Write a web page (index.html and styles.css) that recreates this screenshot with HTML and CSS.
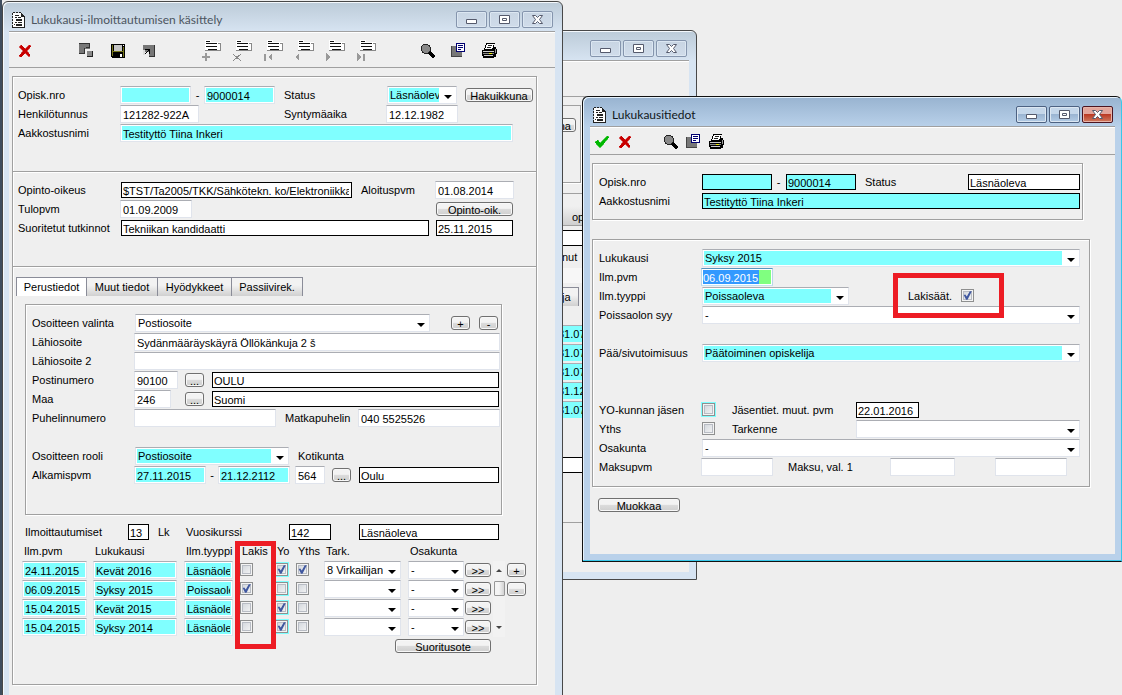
FILE: index.html
```
<!DOCTYPE html>
<html lang="fi">
<head>
<meta charset="utf-8">
<title>Lukukausi-ilmoittautumisen käsittely</title>
<link rel="stylesheet" href="styles.css">
</head>
<body>
<svg class="defs" aria-hidden="true">
  <symbol id="i-app" viewBox="0 0 14 16">
    <path d="M1 1H9L13 5V15H1Z" fill="#fff"/>
    <path d="M1 0h2v1h-2zM4 0h2v1h-2zM7 0h2v1h-2zM9 1h1v1h1v1h1v1h1v1h-4zM12 5h1v11h-1zM0 15h13v1h-13zM0 1h1v2h-1zM0 4h1v2h-1zM0 7h1v2h-1zM0 10h1v2h-1zM0 13h1v2h-1zM3 3h4v1h-4zM3 5h2v1h-2zM6 5h3v1h-3zM4 7h6v2h-6zM3 10h2v1h-2zM6 10h4v1h-4zM4 12h6v2h-6zM2 12h1v1h-1z" fill="#222"/>
  </symbol>
  <symbol id="i-x" viewBox="0 0 14 14">
    <path d="M1 3L3 1L7 5L11 1L13 2L9 7L12 11L11 13L7 9L3 13L1 12L5 7Z" fill="#c80000" stroke="#c80000" stroke-width=".6"/>
  </symbol>
  <symbol id="i-ok" viewBox="0 0 16 14">
    <path d="M1 7L4 5L6 8L13 1L15 2L7 12H5Z" fill="#00b800" stroke="#00b800" stroke-width=".6"/>
  </symbol>
  <symbol id="i-copy" viewBox="0 0 15 15">
    <path d="M0 0h11v6h-5v5h-6z" fill="#777"/><path d="M0 0h11v1h-11zM10 1h1v4h-4v-1h3zM5 5h1v6h-6v-1h5z" fill="#333"/>
    <path d="M8 8h6v6h-6z" fill="#888"/><path d="M13 8h1v6h-6v-1h5z" fill="#222"/>
  </symbol>
  <symbol id="i-save" viewBox="0 0 14 14">
    <path d="M0 0h14v14h-13l-1-1z" fill="#000"/><path d="M1 1h1v11h-1zM12 3h1v10h-1zM2 7h10v1h-10z" fill="#77771a"/>
    <path d="M3 1h8v6h-8z" fill="#c6c6c6"/><path d="M12 1h1v1h-1zM9 10h2v3h-2z" fill="#fff"/>
  </symbol>
  <symbol id="i-go" viewBox="0 0 12 12">
    <path d="M0 0h11v11h-5v-4h-6z" fill="#777"/><path d="M11 0h1v12h-6v-1h5z" fill="#333"/>
    <path d="M2 4h5v5h-1v-3h-1v1h-1v1h-1v1h-1v1h-1v-1h1v-1h1v-1h1v-1h1v-1h-3z" fill="#000"/>
    <path d="M0 5h2v5h-2z" fill="#ddd"/>
  </symbol>
  <symbol id="i-rec" viewBox="0 0 20 13">
    <path d="M3 0h6v2h10v9h-16z" fill="#fff"/>
    <path d="M4 1h4v1h-4zM4 3h11v1h-11zM4 6h11v1h-11zM6 9h9v1h-9z" fill="#111"/>
    <path d="M16 3h3v8h-16v-1h15v-6h-2z" fill="#888"/>
  </symbol>
  <symbol id="i-find" viewBox="0 0 16 16">
    <path d="M3 1h5v1h2v2h1v4h-1v2h-2v1h-4v-1h-2v-2h-1v-5h1v-1h1z" fill="#222"/>
    <path d="M3 2h5v1h1v1h1v4h-1v1h-1v1h-4v-1h-1v-1h-1v-5h1z" fill="#888"/>
    <path d="M10 8L15 13L14 15H12L8 10Z" fill="#000"/>
  </symbol>
  <symbol id="i-doc" viewBox="0 0 15 15">
    <path d="M0 3h11v11h-11z" fill="#777"/><path d="M0 3h1v11h-1zM0 13h11v1h-11z" fill="#444"/>
    <path d="M5 0h9v9h-9z" fill="#000070"/><path d="M6 1h7v7h-7z" fill="#fff"/>
    <path d="M7 2h5v1h-5zM7 4h5v1h-5zM7 6h3v1h-3z" fill="#000070"/>
  </symbol>
  <symbol id="i-print" viewBox="0 0 17 16">
    <path d="M5 0h9v1h-1v3h2v2h1v5h-1v3h-2v1h-11v-2h-1v-6h2v-2h1v-3h1z" fill="#000"/>
    <path d="M6 1h7v1h-1v3h-1v1h-7v-1h1v-3h1z" fill="#fff"/><path d="M7 2h4v1h-4zM6 4h4v1h-4z" fill="#222"/>
    <path d="M2 8h11v1h-11zM3 12h9v1h-9z" fill="#ccc"/><path d="M2 10h11v1h-11z" fill="#888"/><path d="M8 10h3v1h-3z" fill="#ee0"/>
    <path d="M14 6h1v4h-1z" fill="#999"/>
  </symbol>
  <symbol id="i-min" viewBox="0 0 13 13"><path d="M1.500 6.500h10v4h-10z" fill="#fff" stroke="#555a6c"/></symbol>
  <symbol id="i-max" viewBox="0 0 13 13"><path d="M1.500 2.500h10v8h-10zM4.500 5.500h4v2h-4z" fill="#fff" stroke="#555a6c"/></symbol>
  <symbol id="i-close" viewBox="0 0 13 13"><path d="M1.500 2.500H4.500L6.500 4.500L8.500 2.500H11.500L8.500 6.500L11.500 10.500H8.500L6.500 8.500L4.500 10.500H1.500L4.500 6.500Z" fill="#fff" stroke="#555a6c"/></symbol>
</svg>

<main class="desktop">

  <section class="window win-back" aria-label="Taustaikkuna">
    <header class="titlebar">
      <div class="controls">
        <button aria-label="Pienennä"><svg><use href="#i-min"/></svg></button>
        <button aria-label="Suurenna"><svg><use href="#i-max"/></svg></button>
        <button aria-label="Sulje"><svg><use href="#i-close"/></svg></button>
      </div>
    </header>
    <div class="client">
      <div class="toolbar"></div>
      <div class="back-group"><button class="btn">na</button></div>
      <div class="back-bar">op</div>
      <div class="back-line"></div>
      <div class="back-label">nut</div>
      <div class="back-band"></div>
      <div class="back-tab">ja</div>
      <div class="back-list">
        <span>31.07</span><span>31.07</span><span>31.07</span><span>31.12</span><span>31.07</span>
      </div>
      <div class="back-line low"></div>
      <div class="back-rule"></div>
    </div>
  </section>

  <section class="window win-main">
    <header class="titlebar">
      <svg class="app"><use href="#i-app"/></svg>
      <h1>Lukukausi-ilmoittautumisen käsittely</h1>
      <div class="controls">
        <button aria-label="Pienennä"><svg><use href="#i-min"/></svg></button>
        <button aria-label="Suurenna"><svg><use href="#i-max"/></svg></button>
        <button aria-label="Sulje"><svg><use href="#i-close"/></svg></button>
      </div>
    </header>
    <div class="client">
      <div class="toolbar">
        <button aria-label="Peruuta"><svg width="14" height="14"><use href="#i-x"/></svg></button>
        <button class="skip" aria-label="Kopioi"><svg width="15" height="15"><use href="#i-copy"/></svg></button>
        <button aria-label="Tallenna"><svg width="14" height="14"><use href="#i-save"/></svg></button>
        <button aria-label="Siirry"><svg width="12" height="12"><use href="#i-go"/></svg></button>
        <button class="skip" aria-label="Lisää rivi"><svg width="22" height="22" viewBox="-2 0 22 22"><use href="#i-rec" width="20" height="13"/><path class="mark" d="M3 13h2v3h3v2h-3v3h-2v-3h-3v-2h3z"/></svg></button>
        <button aria-label="Poista rivi"><svg width="22" height="22" viewBox="-2 0 22 22"><use href="#i-rec" width="20" height="13"/><path class="line" d="M0 14L8 21M8 14L0 21"/></svg></button>
        <button aria-label="Ensimmäinen"><svg width="22" height="22" viewBox="-2 0 22 22"><use href="#i-rec" width="20" height="13"/><path class="mark" d="M0 14h2v7h-2zM8 13v8l-4-4z"/></svg></button>
        <button aria-label="Edellinen"><svg width="22" height="22" viewBox="-2 0 22 22"><use href="#i-rec" width="20" height="13"/><path class="mark" d="M4 13v8l-4-4z"/></svg></button>
        <button aria-label="Seuraava"><svg width="22" height="22" viewBox="-2 0 22 22"><use href="#i-rec" width="20" height="13"/><path class="mark" d="M0 13v8l4-4z"/></svg></button>
        <button aria-label="Viimeinen"><svg width="22" height="22" viewBox="-2 0 22 22"><use href="#i-rec" width="20" height="13"/><path class="mark" d="M0 13v8l4-4zM6 14h2v7h-2z"/></svg></button>
        <button class="skip" aria-label="Hae"><svg width="16" height="16"><use href="#i-find"/></svg></button>
        <button aria-label="Liitteet"><svg width="15" height="15"><use href="#i-doc"/></svg></button>
        <button aria-label="Tulosta"><svg width="17" height="16"><use href="#i-print"/></svg></button>
      </div>

      <div class="group">
        <div class="part">
          <div class="row r-id">
            <label for="nro1">Opisk.nro</label>
            <input id="nro1" class="field cyan">
            <span class="dash">-</span>
            <input class="field cyan" aria-label="Opisk.nro, loppu" value="9000014">
            <label class="mid" for="status">Status</label>
            <span class="combo cyan"><select id="status"><option>Läsnäoleva</option></select></span>
            <button class="btn">Hakuikkuna</button>
          </div>
          <div class="row r-birth">
            <label for="hetu">Henkilötunnus</label>
            <input id="hetu" class="field w79" value="121282-922A">
            <label for="synt">Syntymäaika</label>
            <input id="synt" class="field" value="12.12.1982">
          </div>
          <div class="row r-name">
            <label for="nimi">Aakkostusnimi</label>
            <input id="nimi" class="field cyan" value="Testityttö Tiina Inkeri">
          </div>
        </div>

        <div class="part">
          <div class="row r-right">
            <label for="oik">Opinto-oikeus</label>
            <input id="oik" class="field boxed" value="$TST/Ta2005/TKK/Sähkötekn. ko/Elektroniikka">
            <label class="mid" for="alku">Aloituspvm</label>
            <input id="alku" class="field" value="01.08.2014">
          </div>
          <div class="row r-entry">
            <label for="tulo">Tulopvm</label>
            <input id="tulo" class="field w72" value="01.09.2009">
            <button class="btn">Opinto-oik.</button>
          </div>
          <div class="row r-degree">
            <label for="tutk">Suoritetut tutkinnot</label>
            <input id="tutk" class="field boxed" value="Tekniikan kandidaatti">
            <input class="field boxed" aria-label="Tutkinnon pvm" value="25.11.2015">
          </div>
        </div>

        <div class="part tabbed">
          <nav class="tabs">
            <button class="on">Perustiedot</button><button>Muut tiedot</button><button class="wide">Hyödykkeet</button><button>Passiivirek.</button>
          </nav>
          <div class="panel">
            <div class="row a-choice">
              <label for="osv">Osoitteen valinta</label>
              <span class="combo"><select id="osv"><option>Postiosoite</option></select></span>
              <button class="btn">+</button>
              <button class="btn">-</button>
            </div>
            <div class="row a-wide"><label for="l1">Lähiosoite</label><input id="l1" class="field" value="Sydänmääräyskäyrä Öllökänkuja 2 š"></div>
            <div class="row a-wide"><label for="l2">Lähiosoite 2</label><input id="l2" class="field"></div>
            <div class="row a-code">
              <label for="pn">Postinumero</label><input id="pn" class="field" value="90100">
              <button class="btn">...</button><input class="field boxed" aria-label="Postitoimipaikka" value="OULU">
            </div>
            <div class="row a-code">
              <label for="maa">Maa</label><input id="maa" class="field w37" value="246">
              <button class="btn">...</button><input class="field boxed" aria-label="Maan nimi" value="Suomi">
            </div>
            <div class="row a-phone">
              <label for="puh">Puhelinnumero</label><input id="puh" class="field">
              <label class="mid" for="matka">Matkapuhelin</label><input id="matka" class="field" value="040 5525526">
            </div>
            <div class="row a-role after-gap">
              <label for="rooli">Osoitteen rooli</label>
              <span class="combo cyan"><select id="rooli"><option>Postiosoite</option></select></span>
              <label class="mid" for="kunta">Kotikunta</label>
            </div>
            <div class="row a-dates">
              <label for="alk">Alkamispvm</label><input id="alk" class="field cyan" value="27.11.2015">
              <span class="dash">-</span><input class="field cyan" aria-label="Päättymispvm" value="21.12.2112">
              <input id="kunta" class="field" value="564"><button class="btn">...</button>
              <input class="field boxed" aria-label="Kotikunnan nimi" value="Oulu">
            </div>
          </div>

          <div class="row e-head">
            <label for="lkm">Ilmoittautumiset</label><input id="lkm" class="field boxed" value="13">
            <label class="mid" for="lkm">Lk</label>
            <label for="vk">Vuosikurssi</label><input id="vk" class="field boxed w42" value="142">
            <input class="field boxed" aria-label="Tila" value="Läsnäoleva">
          </div>
          <div class="enrol">
            <div class="marked">
              <table>
                <colgroup><col class="c1"><col class="c2"><col class="c3"><col class="c4"><col class="c5"><col class="c6"><col class="c7"><col class="c8"><col class="c9"></colgroup>
                <thead><tr><th>Ilm.pvm</th><th>Lukukausi</th><th>Ilm.tyyppi</th><th>Lakis</th><th>Yo</th><th>Yths</th><th>Tark.</th><th>Osakunta</th><th></th></tr></thead>
                <tbody>
                  <tr>
                    <td><input class="field cyan w65" aria-label="Ilm.pvm" value="24.11.2015"></td>
                    <td><input class="field cyan w84" aria-label="Lukukausi" value="Kevät 2016"></td>
                    <td><input class="field cyan w49" aria-label="Ilm.tyyppi" value="Läsnäoleva"></td>
                    <td><input type="checkbox" aria-label="Lakis"></td>
                    <td><input type="checkbox" class="req" aria-label="Yo" checked></td>
                    <td><input type="checkbox" aria-label="Yths" checked></td>
                    <td><span class="combo w77"><select aria-label="Tark."><option>8 Virkailijan</option></select></span></td>
                    <td><span class="combo w56"><select aria-label="Osakunta"><option>-</option></select></span></td>
                    <td><button class="btn">&gt;&gt;</button></td>
                  </tr>
                  <tr>
                    <td><input class="field cyan w65" aria-label="Ilm.pvm" value="06.09.2015"></td>
                    <td><input class="field cyan w84" aria-label="Lukukausi" value="Syksy 2015"></td>
                    <td><input class="field cyan w49" aria-label="Ilm.tyyppi" value="Poissaoleva"></td>
                    <td><input type="checkbox" aria-label="Lakis" checked></td>
                    <td><input type="checkbox" class="req" aria-label="Yo"></td>
                    <td><input type="checkbox" aria-label="Yths"></td>
                    <td><span class="combo w77"><select aria-label="Tark."><option></option></select></span></td>
                    <td><span class="combo w56"><select aria-label="Osakunta"><option>-</option></select></span></td>
                    <td><button class="btn">&gt;&gt;</button></td>
                  </tr>
                  <tr>
                    <td><input class="field cyan w65" aria-label="Ilm.pvm" value="15.04.2015"></td>
                    <td><input class="field cyan w84" aria-label="Lukukausi" value="Kevät 2015"></td>
                    <td><input class="field cyan w49" aria-label="Ilm.tyyppi" value="Läsnäoleva"></td>
                    <td><input type="checkbox" aria-label="Lakis"></td>
                    <td><input type="checkbox" class="req" aria-label="Yo" checked></td>
                    <td><input type="checkbox" aria-label="Yths"></td>
                    <td><span class="combo w77"><select aria-label="Tark."><option></option></select></span></td>
                    <td><span class="combo w56"><select aria-label="Osakunta"><option>-</option></select></span></td>
                    <td><button class="btn">&gt;&gt;</button></td>
                  </tr>
                  <tr>
                    <td><input class="field cyan w65" aria-label="Ilm.pvm" value="15.04.2015"></td>
                    <td><input class="field cyan w84" aria-label="Lukukausi" value="Syksy 2014"></td>
                    <td><input class="field cyan w49" aria-label="Ilm.tyyppi" value="Läsnäoleva"></td>
                    <td><input type="checkbox" aria-label="Lakis"></td>
                    <td><input type="checkbox" class="req" aria-label="Yo" checked></td>
                    <td><input type="checkbox" aria-label="Yths"></td>
                    <td><span class="combo w77"><select aria-label="Tark."><option></option></select></span></td>
                    <td><span class="combo w56"><select aria-label="Osakunta"><option>-</option></select></span></td>
                    <td><button class="btn">&gt;&gt;</button></td>
                  </tr>
                </tbody>
              </table>
              <div class="callout callout-column"></div>
              <button class="btn report">Suoritusote</button>
            </div>
            <div class="scroller"><i class="up"></i><i class="thumb"></i><i class="down"></i></div>
            <div class="stack"><button class="btn">+</button><button class="btn">-</button></div>
          </div>
        </div>
      </div>
    </div>
  </section>

  <section class="window win-term">
    <header class="titlebar">
      <svg class="app"><use href="#i-app"/></svg>
      <h1>Lukukausitiedot</h1>
      <div class="controls">
        <button aria-label="Pienennä"><svg><use href="#i-min"/></svg></button>
        <button aria-label="Suurenna"><svg><use href="#i-max"/></svg></button>
        <button class="red" aria-label="Sulje"><svg><use href="#i-close"/></svg></button>
      </div>
    </header>
    <div class="client">
      <div class="toolbar tight">
        <button aria-label="Hyväksy"><svg width="16" height="14"><use href="#i-ok"/></svg></button>
        <button aria-label="Peruuta"><svg width="14" height="14"><use href="#i-x"/></svg></button>
        <button class="skip" aria-label="Hae"><svg width="16" height="16"><use href="#i-find"/></svg></button>
        <button aria-label="Liitteet"><svg width="15" height="15"><use href="#i-doc"/></svg></button>
        <button aria-label="Tulosta"><svg width="17" height="16"><use href="#i-print"/></svg></button>
      </div>

      <div class="group person">
        <div class="row t-id">
          <label for="tn">Opisk.nro</label><input id="tn" class="field boxed cyan">
          <span class="dash">-</span><input class="field boxed cyan" aria-label="Opisk.nro, loppu" value="9000014">
          <label class="mid" for="ts">Status</label><input id="ts" class="field boxed" value="Läsnäoleva">
        </div>
        <div class="row t-wide"><label for="ta">Aakkostusnimi</label><input id="ta" class="field boxed cyan" value="Testityttö Tiina Inkeri"></div>
      </div>

      <div class="group term">
        <div class="row t-wide"><label for="tl">Lukukausi</label><span class="combo cyan"><select id="tl"><option>Syksy 2015</option></select></span></div>
        <div class="row t-date"><label for="tp">Ilm.pvm</label><span class="field active"><input id="tp" value="06.09.2015"></span></div>
        <div class="row t-type">
          <label for="tt">Ilm.tyyppi</label><span class="combo cyan"><select id="tt"><option>Poissaoleva</option></select></span>
          <span class="legal"><label for="tlak">Lakisäät.</label><input type="checkbox" id="tlak" checked><span class="callout callout-legal"></span></span>
        </div>
        <div class="row t-wide"><label for="tsyy">Poissaolon syy</label><span class="combo"><select id="tsyy"><option>-</option></select></span></div>
        <div class="row t-wide after-gap"><label for="tpaa">Pää/sivutoimisuus</label><span class="combo cyan"><select id="tpaa"><option>Päätoiminen opiskelija</option></select></span></div>
        <div class="row t-check after-gap2">
          <label for="tyo">YO-kunnan jäsen</label><input type="checkbox" class="req" id="tyo">
          <label for="tj">Jäsentiet. muut. pvm</label><input id="tj" class="field boxed w63" value="22.01.2016">
        </div>
        <div class="row t-check">
          <label for="ty">Yths</label><input type="checkbox" id="ty">
          <label for="tk">Tarkenne</label><span class="combo"><select id="tk"><option></option></select></span>
        </div>
        <div class="row t-wide"><label for="to">Osakunta</label><span class="combo"><select id="to"><option>-</option></select></span></div>
        <div class="row t-pay">
          <label for="tm">Maksupvm</label><input id="tm" class="field">
          <label for="tv">Maksu, val. 1</label><input id="tv" class="field w65"><input class="field" aria-label="Maksu, val. 2">
        </div>
      </div>
      <button class="btn edit">Muokkaa</button>
    </div>
  </section>
</main>
</body>
</html>
```
FILE: styles.css
```
* { box-sizing: border-box; }
body {
  margin: 0;
  font: 11px/18px "Liberation Sans", Arial, sans-serif;
  color: #000;
}
button, input, select { font: inherit; color: inherit; margin: 0; padding: 0; border: 0; border-radius: 0; background: none; }
input, select { min-width: 0; outline: 0; }
label { white-space: nowrap; }
svg { display: block; shape-rendering: crispEdges; }
.defs { position: absolute; width: 0; height: 0; }

.desktop {
  position: relative;
  height: 100vh;
  overflow: hidden;
  background: linear-gradient(90deg, #3f4d5e 2px, #eee 2px);
}

/* window frame */
.window {
  position: absolute;
  display: flex;
  flex-direction: column;
  border: 1px solid #484848;
  border-radius: 6px 6px 0 0;
  padding: 0 7px 7px 6px;
  background: linear-gradient(#bccbd8, #d7e4f2 30px);
  box-shadow: inset 1px 1px #f4f8fc;
}
.win-back { left: 555px; top: 30px; width: 142px; height: 550px; }
.win-main { left: 2px; top: 1px; width: 561px; bottom: -16px; }
.win-term {
  left: 582px; top: 96px; right: 0; height: 466px;
  padding: 0 6px 7px 7px;
  border-color: #111;
  border-right-color: #38c8ea;
  background: linear-gradient(#98b3d0, #b9d1ea 30px);
  box-shadow: inset 0 -1px #38c8ea, inset 1px 1px #e6f2fc;
}
.titlebar { display: flex; align-items: center; height: 29px; padding: 6px 2px 0 3px; gap: 5px; }
.titlebar .app { width: 14px; height: 16px; }
.titlebar h1 { margin: 0; font: 12px/18px Lato, "Open Sans", sans-serif; color: #4c5560; white-space: nowrap; }
.win-term h1 { color: #101820; }
.controls { display: flex; gap: 2px; margin-left: auto; }
.controls button {
  display: grid; place-items: center;
  width: 31px; height: 17px;
  border: 1px solid #8595ad; border-radius: 2px;
  background: linear-gradient(#c8d5e3, #d0dcea);
  box-shadow: inset 0 0 0 1px #dce7f2;
}
.controls svg { width: 13px; height: 13px; shape-rendering: auto; }
.win-term .controls button {
  border-color: #4d6282;
  background: linear-gradient(#c5d7ea 45%, #9bb5d2 50%, #b3cce6);
}
.win-term .controls .red {
  border-color: #4c1420;
  background: linear-gradient(#e3a59b 45%, #bb3a24 50%, #d07b60);
  box-shadow: inset 0 0 0 1px #e8b4a8;
}
.client { flex: 1; border-top: 1px solid #a0a0a0; background: #efefef; box-shadow: inset 0 1px #fff; }

.toolbar { display: flex; align-items: center; height: 36px; padding-top: 2px; border-bottom: 1px solid #a0a0a0; }
.toolbar button { display: grid; place-items: center; width: 31px; height: 28px; }
.toolbar .skip { margin-left: 31px; }
.toolbar.tight { height: 28px; }
.toolbar.tight button { width: 23px; height: 24px; }
.toolbar.tight .skip { margin-left: 23px; }
.mark { fill: #999; }
.line { stroke: #888; stroke-width: 1; fill: none; }

/* etched groups */
.group, .panel { border: 1px solid #a0a0a0; box-shadow: 1px 1px #fff, inset 1px 1px #fff; }
.group { margin: 8px 18px 0 3px; }
.part { padding: 9px 3px 0 5px; height: 94px; }
.part + .part { height: 95px; border-top: 1px solid #a0a0a0; box-shadow: inset 0 1px #fff; }
.part.tabbed { height: 418px; padding: 10px 3px 0 3px; }

.row { display: grid; height: 19px; align-items: start; }
.mid { padding-left: 9px; }
.dash { text-align: center; }
.after-gap { margin-top: 19px; }
.after-gap2 { margin-top: 38px; }

/* controls */
.field {
  width: 100%; height: 18px;
  padding: 1px 2px 0;
  border: 1px solid #e0e4ec;
  border-top-color: #abadb3;
  background: #fff;
  box-shadow: inset 0 0 0 1px #fff;
}
.field.cyan { background: #80ffff; }
.field.boxed { height: 16px; margin-top: 1px; padding: 1px 2px 0 1px; border-color: #000; box-shadow: none; }
.row > .field.boxed { margin-left: 1px; width: calc(100% - 1px); }
.field.active { display: block; border-color: #5794bf #b7d5ea #c5e2ef; background: #80ff80; padding: 1px; }
.field.active input { display: block; width: 56px; height: 14px; padding-top: 1px; background: #3399ff; color: #fff; }

.combo {
  display: flex; align-items: center;
  width: 100%; height: 18px;
  border: 1px solid #e0e4ec;
  border-top-color: #abadb3;
  background: #fff;
}
.combo select { appearance: none; flex: 1; height: 14px; margin-left: 1px; padding-left: 1px; line-height: 14px; overflow: hidden; }
.combo.cyan select { background: #80ffff; }
.combo::after {
  content: ""; flex: none;
  margin: 3px 4px 0 5px;
  border: 4px solid transparent;
  border-top-color: #000; border-bottom: 0;
}

input[type="checkbox"] {
  appearance: none; display: block; position: relative;
  width: 13px; height: 13px; margin-top: 2px;
  border: 1px solid #8e8f8f;
  background: linear-gradient(135deg, #cdd2d8, #f8f8f8);
  box-shadow: inset 0 0 0 1px #f4f4f4, inset 0 0 0 2px #b8bcc4;
}
input[type="checkbox"].req { outline: 1px solid #80ffff; }
input[type="checkbox"]:checked::before {
  content: ""; position: absolute; inset: 1px;
  background: #4058a0;
  clip-path: polygon(8% 45%, 25% 38%, 42% 62%, 75% 4%, 98% 4%, 50% 98%, 34% 98%);
}

.btn {
  width: 100%; height: 14px; margin-top: 2px; padding-top: 1px;
  border: 1px solid #707070; border-radius: 3px;
  background: linear-gradient(#f3f3f3 45%, #dcdcdc 50%, #cfcfcf);
  box-shadow: inset 0 0 0 1px #f8f8f8;
  line-height: 13px; white-space: nowrap;
}

.w37 { width: 37px; } .w42 { width: 42px; } .w49 { width: 49px; } .w56 { width: 56px; }
.w63 { width: 63px; } .w65 { width: 65px; } .w72 { width: 72px; } .w77 { width: 77px; }
.w79 { width: 79px; } .w84 { width: 84px; }
.row > .field.boxed.w42 { width: 42px; }
.row > .field.boxed.w63 { width: 63px; }

/* main window rows */
.r-id { grid-template-columns: 102px 71px 13px 71px 112px 1fr 68px; }
.r-id .btn { justify-self: end; }
.r-id .combo { width: 70px; }
.r-birth { grid-template-columns: 102px 164px 102px 72px; }
.r-name { grid-template-columns: 102px 1fr; padding-right: 20px; }
.r-right { grid-template-columns: 102px 1fr 83px 79px; padding-right: 19px; }
.r-entry { grid-template-columns: 102px 1fr 77px; padding-right: 20px; }
.r-degree { grid-template-columns: 96px 1fr 78px; column-gap: 6px; padding-right: 20px; }

.tabs { display: flex; height: 19px; }
.tabs button {
  width: 71px;
  border: solid #8a8c98; border-width: 1px 1px 0 0;
  background: linear-gradient(#f2f2f2 40%, #d0d0d0);
  white-space: nowrap;
}
.tabs .on { background: #fff; border-left-width: 1px; }
.tabs .wide { width: 74px; }
.panel { margin: 8px 31px 0 9px; height: 211px; padding: 9px 1px 0 6px; }
.a-choice { grid-template-columns: 94px 1fr 31px 19px; column-gap: 9px; padding-right: 2px; }
.a-choice .btn { width: 19px; justify-self: end; }
.a-wide { grid-template-columns: 102px 1fr; }
.a-code { grid-template-columns: 102px 44px 33px 1fr; padding-right: 1px; }
.a-code .btn, .a-dates .btn { width: 19px; margin-left: 7px; }
.a-phone { grid-template-columns: 102px 142px 82px 1fr; }
.a-role { grid-template-columns: 103px 154px 1fr; }
.a-dates { grid-template-columns: 102px 72px 12px 72px 35px 33px 1fr; padding-right: 1px; }
#kunta { width: 30px; margin-left: 5px; }

.e-head { margin-top: 8px; grid-template-columns: 102px 22px 37px 102px 70px 1fr; padding: 0 34px 0 9px; }
.enrol { display: flex; padding-left: 6px; }
.marked { position: relative; }
table { width: 469px; table-layout: fixed; border-collapse: collapse; }
.c1 { width: 71px; } .c2 { width: 91px; } .c3 { width: 56px; } .c4 { width: 35px; } .c5 { width: 21px; }
.c6 { width: 28px; } .c7 { width: 84px; } .c8 { width: 57px; } .c9 { width: 26px; }
th { height: 19px; padding: 0 0 0 2px; font-weight: normal; text-align: left; vertical-align: top; white-space: nowrap; }
td { height: 19px; padding: 0; vertical-align: top; }
td > * { display: block; }
td > .combo { display: flex; }
.report { display: block; width: 96px; margin-left: auto; }
.scroller {
  display: flex; flex-direction: column; align-items: center;
  width: 12px; height: 76px; margin: 19px 2px 0; padding: 8px 0;
  background: #f2f2f2;
}
.up { border: 3px solid transparent; border-top: 0; border-bottom: 3px solid #444; }
.thumb { width: 11px; height: 15px; margin-top: 9px; border: 1px solid #979797; border-radius: 1px; background: linear-gradient(90deg, #f4f4f4 45%, #d2d2d2); }
.down { margin-top: auto; border: 3px solid transparent; border-bottom: 0; border-top: 3px solid #444; }
.stack { display: flex; flex-direction: column; gap: 5px; width: 19px; padding-top: 21px; }
.stack .btn { margin-top: 0; }

.callout { position: absolute; border: 5px solid #ed1c24; pointer-events: none; }
.callout-column { left: 213px; top: -1px; width: 41px; height: 108px; }
.callout-legal { left: -15px; top: -14px; width: 111px; height: 45px; }

/* term window rows */
.person { margin: 8px 32px 0 2px; height: 57px; padding: 9px 2px 0 6px; }
.term { margin: 19px 25px 0 2px; height: 248px; padding: 9px 9px 0 6px; }
.t-id { grid-template-columns: 102px 71px 13px 71px 111px 1fr; }
.t-wide { grid-template-columns: 103px 1fr; }
.t-date, .person .t-wide { grid-template-columns: 102px 1fr; }
.t-date .field { width: 72px; }
.t-type { grid-template-columns: 103px 147px 1fr; }
.legal { position: relative; display: flex; gap: 9px; margin-left: 59px; }
.t-check { grid-template-columns: 103px 30px 124px 1fr; }
.row.t-check > .boxed { margin-left: 0; }
.t-pay { grid-template-columns: 102px 87px 102px 105px 72px; }
.t-pay .field:nth-of-type(1) { width: 72px; }
.edit { display: block; width: 82px; margin: 11px 0 0 8px; }

/* covered window */
.back-group { height: 78px; margin: 8px 108px 0 0; padding: 10px 4px; border: 1px solid #a0a0a0; box-shadow: 1px 1px #fff; }
.back-group .btn { width: 36px; margin-left: -27px; padding-right: 4px; text-align: right; }
.back-bar { height: 33px; margin-top: 10px; padding: 14px 0 0 10px; border: solid #a0a0a0; border-width: 1px 0; background: linear-gradient(#f0f0f0 40%, #cfcfcf); }
.back-line { height: 16px; margin-top: 4px; border: solid #000; border-width: 1px 0; background: #fff; }
.back-label { height: 20px; margin-top: 2px; }
.back-band { height: 15px; background: #f7f7f7; }
.back-tab { width: 17px; height: 19px; margin-top: 4px; border: solid #8a8c98; border-width: 1px 1px 0 0; background: linear-gradient(#f2f2f2 40%, #d0d0d0); }
.back-list { display: grid; margin: 19px 0 0 -4px; }
.back-list span { height: 17px; margin-bottom: 2px; border-top: 1px solid #abadb3; background: #80ffff; line-height: 17px; }
.back-line.low { margin-top: 37px; }
.back-rule { margin-top: 49px; border-top: 1px solid #a0a0a0; }
```
